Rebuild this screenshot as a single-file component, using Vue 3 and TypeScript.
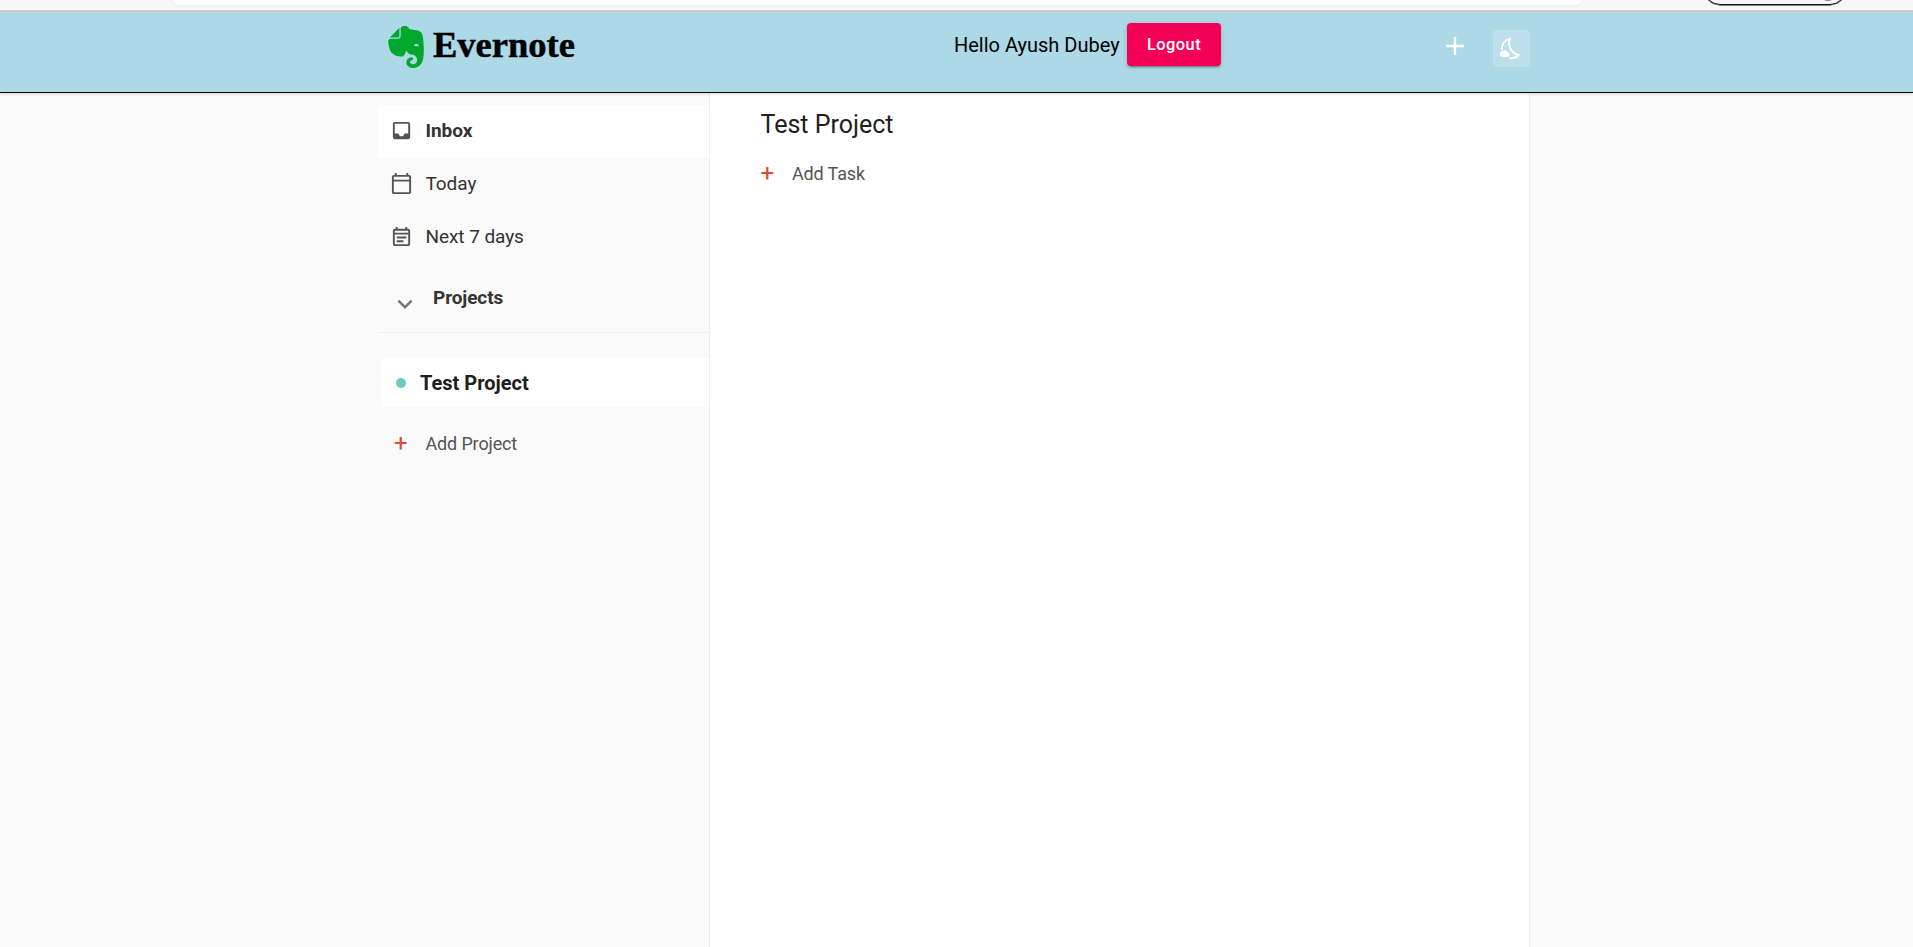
<script setup lang="ts">
import { ref } from 'vue'

interface NavItem {
  key: string
  label: string
  icon: string
}

const active = ref('inbox')
const showProjects = ref(true)
const userName = 'Ayush Dubey'
const projects = ['Test Project']

const navItems: NavItem[] = [
  {
    key: 'inbox',
    label: 'Inbox',
    icon: 'M19 3H5c-1.1 0-2 .9-2 2v14c0 1.1.9 2 2 2h14c1.1 0 2-.9 2-2V5c0-1.1-.9-2-2-2zm0 12h-4c0 1.66-1.35 3-3 3s-3-1.34-3-3H5V5h14v10z',
  },
  {
    key: 'today',
    label: 'Today',
    icon: 'M20 3h-1V1h-2v2H7V1H5v2H4c-1.1 0-2 .9-2 2v16c0 1.1.9 2 2 2h16c1.1 0 2-.9 2-2V5c0-1.1-.9-2-2-2zm0 18H4V10h16v11zm0-13H4V5h16v3z',
  },
  {
    key: 'next',
    label: 'Next 7 days',
    icon: 'M19 4h-1V2h-2v2H8V2H6v2H5c-1.11 0-1.99.9-1.99 2L3 20c0 1.1.89 2 2 2h14c1.1 0 2-.9 2-2V6c0-1.1-.9-2-2-2zm0 16H5V10h14v10zm0-12H5V6h14v2zM7 12h10v2H7zm0 4h7v2H7z',
  },
]
</script>

<template>
  <div class="page">
    <div class="browser">
      <div class="address"></div>
      <div class="pill"><span class="avatar"></span></div>
    </div>
    <header class="header">
      <div class="header-inner">
        <div class="brand">
          <svg class="elephant" viewBox="0 0 24 24">
            <path d="M8.222 5.393c0 .239-.02.637-.256.895-.257.24-.652.259-.888.259H4.552c-.73 0-1.165 0-1.46.04-.159.02-.356.1-.455.14-.04.019-.04 0-.02-.02L8.38.796c.02-.02.04-.02.02.02-.04.099-.118.298-.138.457-.04.298-.04.736-.04 1.472v2.647zm5.348 17.869c-.67-.438-1.026-1.015-1.164-1.373a2.924 2.924 0 01-.217-1.095 3.007 3.007 0 013-3.004c.493 0 .888.398.888.895a.88.88 0 01-.454.776c-.099.06-.237.1-.336.12-.098.02-.473.06-.65.218-.198.16-.356.418-.356.697 0 .298.118.577.316.776.355.358.829.557 1.342.557a2.436 2.436 0 002.427-2.447c0-1.214-.809-2.29-1.875-2.766-.158-.08-.414-.14-.651-.2a8.04 8.04 0 00-.592-.1c-.829-.1-2.901-.755-3.04-2.605 0 0-.611 2.785-1.835 3.54-.118.06-.276.12-.454.16-.177.04-.374.06-.434.06-1.993.12-4.105-.517-5.565-2.03 0 0-.987-.815-1.5-3.103-.118-.558-.355-1.553-.493-2.488-.06-.338-.08-.597-.099-.836 0-.975.592-1.631 1.342-1.73h4.026c.69 0 1.086-.18 1.342-.42.336-.317.415-.775.415-1.312V1.354C9.05.617 9.703 0 10.669 0h.474c.197 0 .434.02.651.04.158.02.296.06.533.12 1.204.298 1.46 1.532 1.46 1.532s2.27.398 3.415.597c1.085.199 3.77.378 4.282 3.104 1.204 6.487.474 12.775.415 12.775-.849 6.129-5.901 5.83-5.901 5.83a4.1 4.1 0 01-2.428-.736zm4.54-13.034c-.652-.06-1.204.2-1.402.697-.04.1-.079.219-.059.278.02.06.06.08.099.1.237.12.631.179 1.204.239.572.06.967.1 1.223.06.04 0 .08-.02.119-.08.04-.06.02-.18.02-.28-.06-.536-.553-.934-1.204-1.014z" />
          </svg>
          <svg class="wordmark" viewBox="0 0 150 44">
            <text x="4" y="30.500" textLength="142" lengthAdjust="spacingAndGlyphs">Evernote</text>
          </svg>
        </div>
        <div class="user">
          <span class="hello">Hello {{ userName }}</span>
          <button class="logout" type="button">Logout</button>
        </div>
        <div class="actions">
          <svg class="plus-icon" viewBox="0 0 18 18"><path d="M9 0v18M0 9h18" /></svg>
          <button class="theme" type="button" aria-label="Toggle dark mode">
            <svg viewBox="0 0 37 37">
              <path class="moon" d="M9 19.5C8.6 14 12 10 16.800 8.900C14.600 15.500 18 23 25.500 25C23.300 27.600 20 28.600 16.500 28" />
              <path class="cloud" d="M10 27a3 3 0 0 1-.2-6a3.300 3.300 0 0 1 5.200 1.500a2.300 2.300 0 0 1-.5 4.500z" />
            </svg>
          </button>
        </div>
      </div>
    </header>
    <div class="body">
      <aside class="sidebar">
        <nav>
          <div
            v-for="item in navItems"
            :key="item.key"
            class="nav-item"
            :class="{ active: active === item.key }"
            @click="active = item.key"
          >
            <svg class="nav-icon" viewBox="0 0 24 24"><path :d="item.icon" /></svg>
            <span class="nav-label">{{ item.label }}</span>
          </div>
        </nav>
        <div class="projects-head" @click="showProjects = !showProjects">
          <svg class="chevron" viewBox="0 0 24 24"><path d="M7.41 8.59 12 13.17l4.59-4.58L18 10l-6 6-6-6 1.41-1.41z" /></svg>
          <span>Projects</span>
        </div>
        <div v-if="showProjects" class="project-list">
          <div v-for="project in projects" :key="project" class="project">
            <span class="dot"></span>
            <span class="project-name">{{ project }}</span>
          </div>
        </div>
        <div class="add add-project"><span class="add-plus">+</span><span class="add-label">Add Project</span></div>
      </aside>
      <main class="content">
        <h2>{{ projects[0] }}</h2>
        <div class="add add-task"><span class="add-plus">+</span><span class="add-label">Add Task</span></div>
      </main>
    </div>
  </div>
</template>

<style>
body {
  background: #fafafa;
}
</style>

<style scoped>
.page {
  height: 947px;
  overflow: hidden;
  display: flex;
  flex-direction: column;
  background: #fafafa;
  color: #202020;
  font-family: Roboto, "Liberation Sans", sans-serif;
}
.page * {
  box-sizing: border-box;
}
.browser {
  flex: none;
  height: 12px;
  display: flex;
  align-items: flex-start;
  background: #f7f7f7;
  border-bottom: 2px solid #d0cecf;
  overflow: hidden;
}
.address {
  width: 1407px;
  height: 5px;
  margin-left: 174px;
  background: #fff;
  border-radius: 0 0 5px 5px;
  box-shadow: 0 0 5px rgba(0, 0, 0, 0.08);
}
.pill {
  flex: none;
  width: 142px;
  height: 32px;
  margin: -27px 0 0 123px;
  border: 1.5px solid #111;
  box-shadow: 0 0 0 0.4px #111;
  border-radius: 16px;
  display: flex;
  justify-content: flex-end;
  align-items: flex-end;
  padding: 0 8px 3px;
}
.avatar {
  width: 18px;
  height: 18px;
  border-radius: 50%;
  background: #8a8a8a;
}
.header {
  flex: none;
  height: 81px;
  background: #add8e6;
  border-bottom: 1px solid #000;
  box-shadow: 0 1px 3px rgba(0, 0, 0, 0.15);
  z-index: 1;
}
.header-inner {
  width: 1152px;
  margin-left: 378px;
  display: flex;
  align-items: flex-start;
}
.brand {
  display: flex;
  width: 576px;
  padding: 14px 0 0 7px;
}
.elephant {
  width: 42px;
  height: 42px;
  fill: #00a82d;
}
.wordmark {
  width: 150px;
  height: 44px;
  margin-left: 2px;
}
.wordmark text {
  font: bold 36px "Liberation Serif", serif;
  stroke: #000;
  stroke-width: 0.5px;
}
.user {
  display: flex;
  align-items: center;
  width: 490px;
  padding-top: 11px;
}
.hello {
  font-size: 20px;
  color: #000;
  white-space: nowrap;
  width: 173px;
}
.logout {
  width: 94px;
  height: 43px;
  padding: 0 0 1px;
  border: 0;
  border-radius: 4px;
  background: #f50057;
  color: #fff;
  font: 500 16.4px Roboto, "Liberation Sans", sans-serif;
  letter-spacing: 0.47px;
  box-shadow: 0 3px 1px -2px rgba(0, 0, 0, 0.2), 0 2px 2px rgba(0, 0, 0, 0.14), 0 1px 5px rgba(0, 0, 0, 0.12);
}
.actions {
  display: flex;
  align-items: flex-start;
  padding-top: 18px;
}
.plus-icon {
  width: 18px;
  height: 18px;
  margin: 7px 29px 0 2px;
  stroke: #fff;
  stroke-width: 2.4;
}
.theme {
  width: 37px;
  height: 37px;
  padding: 0;
  border: 0;
  border-radius: 4px;
  background: rgba(255, 255, 255, 0.2);
}
.theme svg {
  display: block;
  width: 37px;
  height: 37px;
}
.moon {
  fill: none;
  stroke: #fff;
  stroke-width: 2;
}
.cloud {
  fill: #fff;
}
.body {
  flex: 1;
  display: flex;
  width: 1152px;
  margin-left: 378px;
}
.sidebar {
  width: 332px;
  padding-top: 12px;
  border-right: 1px solid #eee;
}
.nav-item {
  display: flex;
  align-items: center;
  height: 53px;
  padding: 0 0 2px 12px;
  font-size: 19px;
  letter-spacing: -0.07px;
  color: #333;
}
.nav-item.active {
  background: #fff;
  font-weight: 700;
}
.nav-icon {
  width: 23px;
  height: 23px;
  margin-right: 12.5px;
  fill: #555;
}
.projects-head {
  display: flex;
  align-items: center;
  height: 69px;
  padding: 0 0 2px 12px;
  border-bottom: 1px solid #eee;
  font-size: 19px;
  font-weight: 700;
  letter-spacing: -0.1px;
  color: #333;
}
.chevron {
  width: 30px;
  height: 30px;
  margin: 13px 13px 0 0;
  fill: #777;
}
.project-list {
  padding: 25px 0 0 4px;
}
.project {
  display: flex;
  align-items: center;
  height: 49px;
  padding-left: 14px;
  background: #fff;
  font-size: 20px;
  font-weight: 700;
}
.dot {
  width: 10px;
  height: 10px;
  margin-right: 14px;
  border-radius: 50%;
  background: #6accbc;
}
.add {
  display: flex;
  align-items: center;
  height: 30px;
  color: #555;
  font-size: 18px;
  letter-spacing: -0.15px;
}
.add-plus {
  width: 31.5px;
  color: #dd4b39;
  font-size: 24px;
  line-height: 30px;
}
.add-project {
  margin: 21px 0 0 16px;
}
.content {
  flex: 1;
  padding: 17px 0 0 50.5px;
  background: #fff;
  border-right: 1px solid #eee;
}
h2 {
  margin: 0;
  font-size: 25px;
  font-weight: 400;
  line-height: 30px;
}
.add-task {
  margin-top: 18px;
}
</style>
